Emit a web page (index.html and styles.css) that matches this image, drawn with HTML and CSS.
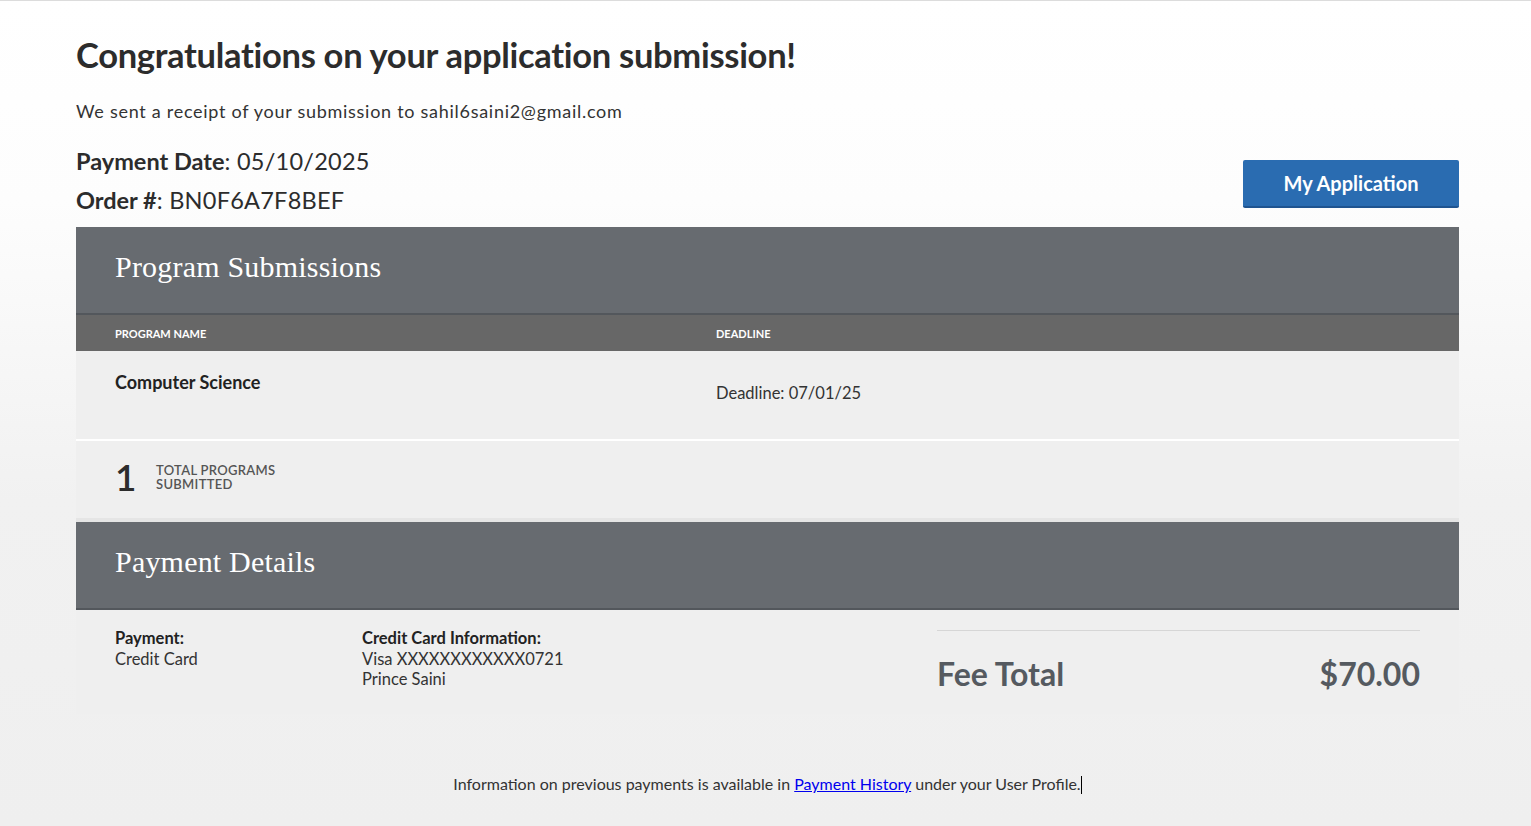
FILE: index.html
```html
<!DOCTYPE html>
<html>
<head>
<meta charset="utf-8">
<link rel="stylesheet" href="styles.css">
</head>
<body>
<div class="page">
  <header class="intro">
    <h1 class="title">Congratulations on your application submission!</h1>
    <p class="receipt">We sent a receipt of your submission to sahil6saini2@gmail.com</p>
    <div class="meta-row">
      <div class="meta">
        <div class="meta-line"><span class="meta-label">Payment Date</span>: 05/10/2025</div>
        <div class="meta-line"><span class="meta-label">Order #</span>: BN0F6A7F8BEF</div>
      </div>
      <a class="btn-app">My Application</a>
    </div>
  </header>

  <section class="panel">
    <h2 class="panel-title">Program Submissions</h2>
    <div class="table-head">
      <div class="th">PROGRAM NAME</div>
      <div class="th">DEADLINE</div>
    </div>
    <div class="table-row">
      <div class="program-name">Computer Science</div>
      <div class="deadline">Deadline: 07/01/25</div>
    </div>
    <div class="total-row">
      <div class="total-num">1</div>
      <div class="total-label">TOTAL PROGRAMS<br>SUBMITTED</div>
    </div>
  </section>

  <section class="panel pay-panel">
    <h2 class="panel-title">Payment Details</h2>
    <div class="pay-body">
      <div class="pay-col pay-method">
        <div class="pay-label">Payment:</div>
        <div>Credit Card</div>
      </div>
      <div class="pay-col pay-card">
        <div class="pay-label">Credit Card Information:</div>
        <div>Visa XXXXXXXXXXXX0721</div>
        <div>Prince Saini</div>
      </div>
      <div class="fee">
        <span>Fee Total</span>
        <span>$70.00</span>
      </div>
    </div>
  </section>

  <p class="footer-note">Information on previous payments is available in <a href="#" class="link">Payment History</a> under your User Profile.<span class="caret"></span></p>
</div>
</body>
</html>
```

FILE: styles.css
```css
html, body {
  margin: 0;
  padding: 0;
}
body {
  font-family: Lato, "Open Sans", sans-serif;
  color: #333;
  background: linear-gradient(to bottom, #ffffff 0px, #fdfdfd 200px, #f1f1f1 500px, #efefef 826px);
  min-height: 826px;
  border-top: 1px solid #dcdcdc;
  box-sizing: border-box;
}
.page {
  padding: 0 72px 0 76px;
}
.intro {
  padding-top: 34px;
}
.title {
  margin: 0;
  font-size: 34.5px;
  font-weight: 700;
  color: #2c2c2c;
  line-height: 40px;
  letter-spacing: -0.3px;
}
.receipt {
  margin: 24px 0 0;
  font-size: 18px;
  line-height: 24px;
  color: #333;
  letter-spacing: 0.72px;
}
.meta-row {
  display: flex;
  justify-content: space-between;
  align-items: flex-end;
  margin-top: 19px;
  padding-bottom: 7px;
}
.meta-line {
  font-size: 23.5px;
  line-height: 39px;
  color: #2c2c2c;
  letter-spacing: 0.25px;
}
.meta-label {
  font-weight: 700;
  letter-spacing: 0;
}
.btn-app {
  display: block;
  width: 216px;
  height: 46px;
  line-height: 46px;
  text-align: center;
  background: #2a6cb1;
  border-bottom: 2px solid #1f5490;
  border-radius: 2px;
  color: #fff;
  font-weight: 700;
  font-size: 20px;
  margin-bottom: 12px;
}
.panel {
  background: #efefef;
}
.panel-title {
  margin: 0;
  background: #676b70;
  border-bottom: 2px solid #53575c;
  color: #fff;
  font-family: "Liberation Serif", serif;
  font-weight: 400;
  font-size: 30px;
  height: 86px;
  line-height: 80px;
  padding-left: 39px;
  letter-spacing: 0.2px;
}
.table-head {
  display: grid;
  grid-template-columns: 601px 1fr;
  background: #676767;
  height: 36px;
  align-items: center;
  padding-left: 39px;
}
.th {
  color: #fff;
  font-size: 11px;
  font-weight: 700;
}
.table-row {
  display: grid;
  grid-template-columns: 601px 1fr;
  height: 88px;
  padding-left: 39px;
  border-bottom: 2px solid #fff;
}
.program-name {
  font-weight: 700;
  font-size: 18px;
  color: #222;
  padding-top: 20px;
}
.deadline {
  font-size: 16.5px;
  color: #333;
  padding-top: 32px;
}
.total-row {
  display: flex;
  align-items: center;
  height: 71px;
  padding-bottom: 6px;
  padding-left: 39px;
  border-bottom: 4px solid #e5e5e5;
}
.total-num {
  font-size: 37px;
  font-weight: 600;
  color: #2c2c2c;
  width: 41px;
  line-height: 1;
}
.total-label {
  font-size: 13px;
  line-height: 14px;
  color: #555;
  font-weight: 600;
  letter-spacing: 0.3px;
}
.pay-body {
  display: flex;
  padding: 18px 39px 5px 39px;
  font-size: 16.5px;
  line-height: 20.5px;
  color: #333;
}
.pay-label {
  font-weight: 700;
  color: #222;
}
.pay-method {
  width: 247px;
}
.pay-card {
  flex: 1;
}
.fee {
  width: 483px;
  border-top: 1px solid #d6d6d6;
  display: flex;
  justify-content: space-between;
  align-items: center;
  height: 70px;
  margin-top: 2px;
  padding-top: 8px;
  font-size: 32px;
  font-weight: 700;
  color: #555a60;
}
.footer-note {
  text-align: center;
  margin: 60px 0 0;
  font-size: 16px;
  color: #333;
}
.link {
  color: #0000ee;
  text-decoration: underline;
}
.caret {
  display: inline-block;
  width: 1px;
  height: 18px;
  background: #000;
  vertical-align: -4px;
}
```
